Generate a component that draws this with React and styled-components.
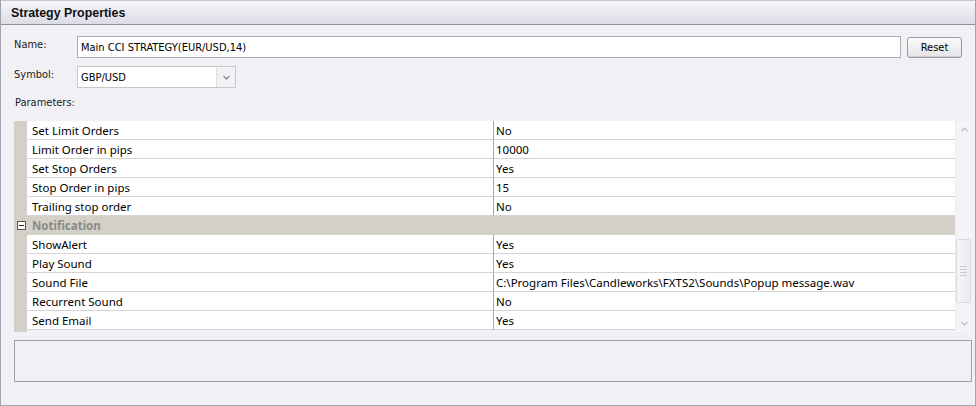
import React from 'react';
import styled, { createGlobalStyle } from 'styled-components';

const GlobalStyle = createGlobalStyle`
  html, body {
    margin: 0;
    padding: 0;
    background: #f0f0f5;
  }
`;

const params = [
  { name: 'Set Limit Orders', value: 'No' },
  { name: 'Limit Order in pips', value: '10000' },
  { name: 'Set Stop Orders', value: 'Yes' },
  { name: 'Stop Order in pips', value: '15' },
  { name: 'Trailing stop order', value: 'No' },
  { category: 'Notification' },
  { name: 'ShowAlert', value: 'Yes' },
  { name: 'Play Sound', value: 'Yes' },
  { name: 'Sound File', value: 'C:\\Program Files\\Candleworks\\FXTS2\\Sounds\\Popup message.wav' },
  { name: 'Recurrent Sound', value: 'No' },
  { name: 'Send Email', value: 'Yes' },
];

/* Styled Components */

const Window = styled.div`
  box-sizing: border-box;
  width: 976px;
  height: 406px;
  display: flex;
  flex-direction: column;
  border: 1px solid #a3a3b0;
  border-top: none;
  background: #f0f0f5;
  font-family: Tahoma, "DejaVu Sans", sans-serif;
`;

const Header = styled.div`
  height: 23px;
  flex: none;
  display: flex;
  align-items: center;
  padding-left: 10px;
  background: linear-gradient(#f6f6fa, #dcdce6);
  border-top: 1px solid #c4c4d0;
  border-bottom: 1px solid #8f8fa0;
  font-family: "Liberation Sans", Arial, sans-serif;
  font-weight: bold;
  font-size: 12.4px;
  color: #111;
`;

const Body = styled.div`
  flex: 1;
  display: flex;
  flex-direction: column;
  padding: 11px 4px 0 12px;
`;

const FieldRow = styled.div`
  display: flex;
  align-items: center;
  gap: 6px;
  margin-bottom: ${(props) => props.gap || 0}px;
`;

const Label = styled.div`
  width: 57px;
  padding-left: 1px;
  align-self: flex-start;
  padding-top: 2px;
  font-family: "DejaVu Sans Condensed", "Liberation Sans", sans-serif;
  font-size: 11px;
  color: #222;
`;

const TextInput = styled.div`
  box-sizing: border-box;
  width: 824px;
  height: 22px;
  display: flex;
  align-items: center;
  padding-left: 3px;
  background: #fff;
  border: 1px solid #abadb3;
  font-family: "DejaVu Sans Condensed", "Liberation Sans", sans-serif;
  font-size: 11px;
  color: #000;
`;

const Button = styled.div`
  box-sizing: border-box;
  width: 55px;
  height: 21px;
  display: flex;
  align-items: center;
  justify-content: center;
  background: linear-gradient(#fafafa, #e4e4e8);
  border: 1px solid #9a9aa4;
  border-radius: 3px;
  box-shadow: inset 0 -1px 0 #d0d0d6;
  font-family: "DejaVu Sans Condensed", "Liberation Sans", sans-serif;
  font-size: 11px;
  color: #000;
`;

const Combo = styled.div`
  box-sizing: border-box;
  width: 159px;
  height: 22px;
  display: flex;
  background: #fff;
  border: 1px solid #c6c6cc;
`;

const ComboText = styled.div`
  flex: 1;
  display: flex;
  align-items: center;
  padding-left: 3px;
  font-family: "DejaVu Sans Condensed", "Liberation Sans", sans-serif;
  font-size: 11px;
  color: #000;
`;

const ComboButton = styled.div`
  width: 18px;
  display: flex;
  align-items: center;
  justify-content: center;
  background: #f2f2f4;
  border-left: 1px solid #e0e0e4;
`;

const SectionLabel = styled.div`
  height: 18px;
  margin: 8px 0 7px 0;
  padding-left: 2px;
  font-family: "DejaVu Sans Condensed", "Liberation Sans", sans-serif;
  font-size: 11px;
  color: #222;
`;

const Grid = styled.div`
  width: 958px;
  height: 211px;
  flex: none;
  display: flex;
  margin-left: 1px;
`;

const GridBody = styled.div`
  flex: 1;
  display: flex;
  flex-direction: column;
  background: linear-gradient(90deg, #d4d0c8 13px, transparent 13px);
`;

const Row = styled.div`
  display: flex;
  height: 19px;
  box-sizing: border-box;
  font-family: "Noto Sans", "Open Sans", sans-serif;
  font-size: 11.5px;
  color: #000;
`;

const Margin = styled.div`
  width: 13px;
  flex: none;
  display: flex;
  align-items: center;
  justify-content: center;
`;

const NameCell = styled.div`
  width: 461px;
  padding-left: 5px;
  display: flex;
  align-items: center;
  background: #fff;
  border-bottom: 1px solid #d4d4d4;
  border-right: 1px solid #a8a8a8;
  white-space: nowrap;
`;

const ValueCell = styled.div`
  flex: 1;
  padding-left: 2px;
  display: flex;
  align-items: center;
  background: #fff;
  border-bottom: 1px solid #d4d4d4;
  white-space: nowrap;
`;

const CategoryRow = styled(Row)`
  background: #d4d0c8;
`;

const CategoryTitle = styled.div`
  padding-left: 5px;
  display: flex;
  align-items: center;
  font-weight: bold;
  color: #8a8a8a;
`;

const Expander = styled.div`
  box-sizing: border-box;
  width: 9px;
  height: 9px;
  margin-left: 1px;
  border: 1px solid #555;
  background: #fff;
  position: relative;

  &::after {
    content: '';
    position: absolute;
    left: 1px;
    top: 3px;
    width: 5px;
    height: 1px;
    background: #222;
  }
`;

const Scrollbar = styled.div`
  width: 16px;
  flex: none;
  display: flex;
  flex-direction: column;
  align-items: center;
  background: #f4f4f8;
  border-left: 1px solid #ececf0;
`;

const ScrollArrow = styled.div`
  height: 17px;
  display: flex;
  align-items: center;
  justify-content: center;
`;

const ScrollTrack = styled.div`
  flex: 1;
  width: 100%;
  display: flex;
  flex-direction: column;
  padding-top: ${(props) => props.offset}px;
  box-sizing: border-box;
`;

const Thumb = styled.div`
  box-sizing: border-box;
  width: 15px;
  height: 64px;
  border: 1px solid #d8d8e0;
  border-radius: 2px;
  background: linear-gradient(90deg, #f4f4f8, #ebebf2);
  display: flex;
  flex-direction: column;
  justify-content: center;
  align-items: center;
  gap: 2px;
`;

const Grip = styled.div`
  width: 7px;
  height: 1px;
  background: #c8c8d2;
`;

const Description = styled.div`
  box-sizing: border-box;
  width: 958px;
  height: 42px;
  margin: 8px 0 0 1px;
  border: 1px solid #a0a0a8;
  background: #f0f0f5;
`;

/* Main Component */

const Arrow = ({ down }) => (
  <svg width="7" height="5" viewBox="0 0 7 5">
    <path
      d={down ? 'M0.5 1 L3.5 4 L6.5 1' : 'M0.5 4 L3.5 1 L6.5 4'}
      fill="none"
      stroke="#b8b8c4"
      strokeWidth="1.2"
    />
  </svg>
);

const App = () => (
  <>
    <GlobalStyle />
    <Window>
      <Header>Strategy Properties</Header>

      <Body>
        <FieldRow gap={8}>
          <Label>Name:</Label>
          <TextInput>Main CCI STRATEGY(EUR/USD,14)</TextInput>
          <Button>Reset</Button>
        </FieldRow>

        <FieldRow>
          <Label>Symbol:</Label>
          <Combo>
            <ComboText>GBP/USD</ComboText>
            <ComboButton>
              <svg width="7" height="5" viewBox="0 0 7 5">
                <path d="M0.5 1 L3.5 4 L6.5 1" fill="none" stroke="#8a8a96" strokeWidth="1.3" />
              </svg>
            </ComboButton>
          </Combo>
        </FieldRow>

        <SectionLabel>Parameters:</SectionLabel>

        <Grid>
          <GridBody>
            {params.map((p) => (
              p.category ? (
                <CategoryRow key={p.category}>
                  <Margin>
                    <Expander />
                  </Margin>
                  <CategoryTitle>{p.category}</CategoryTitle>
                </CategoryRow>
              ) : (
                <Row key={p.name}>
                  <Margin />
                  <NameCell>{p.name}</NameCell>
                  <ValueCell>{p.value}</ValueCell>
                </Row>
              )
            ))}
          </GridBody>

          <Scrollbar>
            <ScrollArrow>
              <Arrow />
            </ScrollArrow>
            <ScrollTrack offset={101}>
              <Thumb>
                <Grip />
                <Grip />
                <Grip />
                <Grip />
              </Thumb>
            </ScrollTrack>
            <ScrollArrow>
              <Arrow down />
            </ScrollArrow>
          </Scrollbar>
        </Grid>

        <Description />
      </Body>
    </Window>
  </>
);

export default App;
